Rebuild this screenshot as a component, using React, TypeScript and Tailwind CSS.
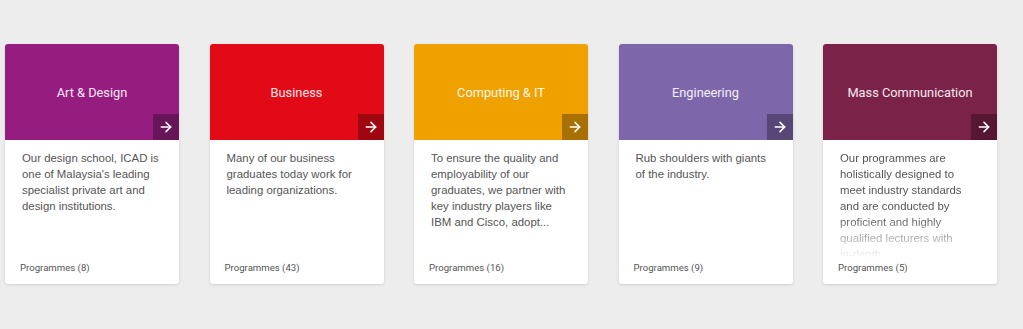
import { ArrowRight } from "lucide-react";

interface Faculty {
  title: string;
  color: string;
  blurb: string;
  count: number;
  fade?: boolean;
}

const faculties: Faculty[] = [
  {
    title: "Art & Design",
    color: "bg-[#961d80]",
    blurb:
      "Our design school, ICAD is one of Malaysia's leading specialist private art and design institutions.",
    count: 8,
  },
  {
    title: "Business",
    color: "bg-[#e20a17]",
    blurb:
      "Many of our business graduates today work for leading organizations.",
    count: 43,
  },
  {
    title: "Computing & IT",
    color: "bg-[#efa100]",
    blurb:
      "To ensure the quality and employability of our graduates, we partner with key industry players like IBM and Cisco, adopt...",
    count: 16,
  },
  {
    title: "Engineering",
    color: "bg-[#7e66aa]",
    blurb: "Rub shoulders with giants of the industry.",
    count: 9,
  },
  {
    title: "Mass Communication",
    color: "bg-[#7b2249]",
    blurb:
      "Our programmes are holistically designed to meet industry standards and are conducted by proficient and highly qualified lecturers with in\u2011depth...",
    count: 5,
    fade: true,
  },
];

const FacultyCard = ({ faculty }: { faculty: Faculty }) => (
  <div className="w-[174px] h-[240px] shrink-0 bg-white rounded-[3px] shadow-[0_1px_3px_rgba(0,0,0,0.12)] overflow-hidden flex flex-col">
    <div
      className={`relative h-[96px] ${faculty.color} flex items-center justify-center pt-[1px]`}
    >
      <span className="font-['Roboto',sans-serif] text-[12.8px] text-white/90">
        {faculty.title}
      </span>
      <div className="absolute right-0 bottom-0 w-[26px] h-[26px] bg-black/30 flex items-center justify-center">
        <ArrowRight size={16} strokeWidth={2.3} className="text-white" />
      </div>
    </div>
    <div className="flex-1 flex flex-col pl-[17px] pr-[15px] pt-[10px] pb-[9px]">
      <p
        className={`font-['Liberation_Sans',Arial,sans-serif] text-[11.4px] leading-[16px] text-[#555] h-[106px] overflow-hidden ${
          faculty.fade
            ? "[mask-image:linear-gradient(to_bottom,black_62%,rgba(0,0,0,0.05)_100%)]"
            : ""
        }`}
      >
        {faculty.blurb}
      </p>
      <div className="mt-auto -ml-[2px] font-['Roboto',sans-serif] text-[9.6px] text-[#555]">
        Programmes ({faculty.count})
      </div>
    </div>
  </div>
);

export default function App() {
  return (
    <div className="w-[1023px] h-[329px] bg-[#ededed] pt-[44px] pl-[5px]">
      <div className="flex gap-[30.5px]">
        {faculties.map((f) => (
          <FacultyCard key={f.title} faculty={f} />
        ))}
      </div>
    </div>
  );
}
